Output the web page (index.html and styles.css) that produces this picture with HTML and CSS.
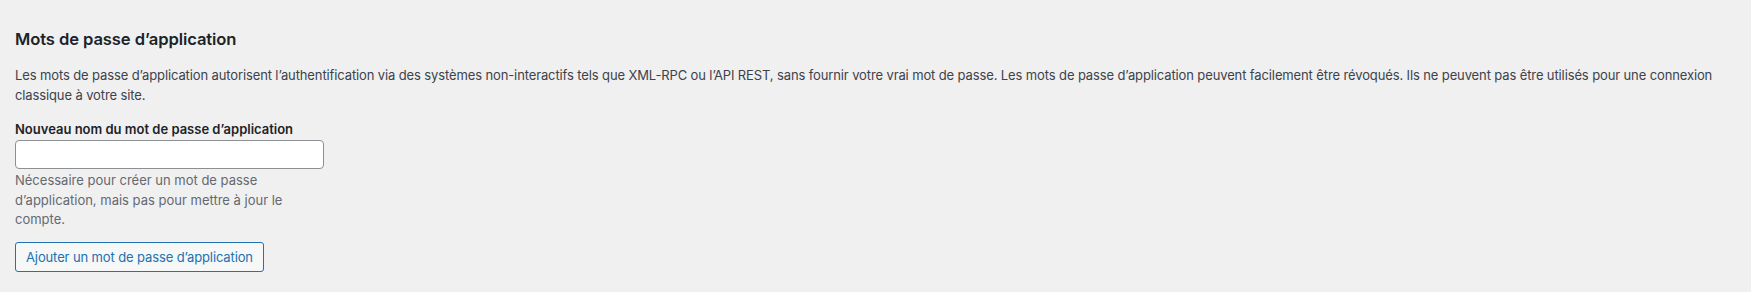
FILE: index.html
```html
<!DOCTYPE html>
<html lang="fr">
<head>
<meta charset="utf-8">
<title>Mots de passe d’application</title>
<link rel="stylesheet" href="styles.css">
</head>
<body>
<div class="wrap">
  <h2 class="title">Mots de passe d’application</h2>
  <p class="intro">Les mots de passe d’application autorisent l’authentification via des systèmes non-interactifs tels que XML-RPC ou l’API REST, sans fournir votre vrai mot de passe. Les mots de passe d’application peuvent facilement être révoqués. Ils ne peuvent pas être utilisés pour une connexion classique à votre site.</p>
  <div class="field">
    <label class="label" for="new-name">Nouveau nom du mot de passe d’application</label>
    <input class="input" type="text" id="new-name">
    <p class="desc">Nécessaire pour créer un mot de passe d’application, mais pas pour mettre à jour le compte.</p>
  </div>
  <button class="button" type="button">Ajouter un mot de passe d’application</button>
</div>
</body>
</html>
```
FILE: styles.css
```css
html, body {
  margin: 0;
  padding: 0;
  background: #f0f0f1;
}
body {
  font-family: Inter, "Liberation Sans", Arial, sans-serif;
  font-size: 13px;
  color: #3c434a;
  line-height: 1.5;
}
.wrap {
  padding: 28px 20px 0 15px;
}
.title {
  font-size: 16.6px;
  font-weight: 600;
  color: #1d2327;
  margin: 0 0 15px 0;
  line-height: 22px;
  letter-spacing: -0.1px;
}
.intro {
  margin: 0 0 14px 0;
  line-height: 20px;
  letter-spacing: -0.12px;
}
.field {
  display: flex;
  flex-direction: column;
  width: 309px;
}
.label {
  font-weight: 600;
  font-size: 13px;
  color: #1d2327;
  line-height: 20px;
  margin-bottom: 1px;
}
.input {
  box-sizing: border-box;
  width: 309px;
  height: 29px;
  border: 1px solid #8c8f94;
  border-radius: 4px;
  background: #fff;
  margin: 0;
  padding: 0 8px;
}
.desc {
  margin: 2px 0 0 0;
  color: #646970;
  line-height: 19.5px;
  width: 285px;
}
.button {
  margin-top: 12px;
  box-sizing: border-box;
  height: 30px;
  padding: 0 10px;
  font-family: inherit;
  font-size: 13px;
  letter-spacing: -0.12px;
  color: #2271b1;
  border: 1px solid #2271b1;
  border-radius: 3px;
  background: #f6f7f7;
  cursor: pointer;
}
```
